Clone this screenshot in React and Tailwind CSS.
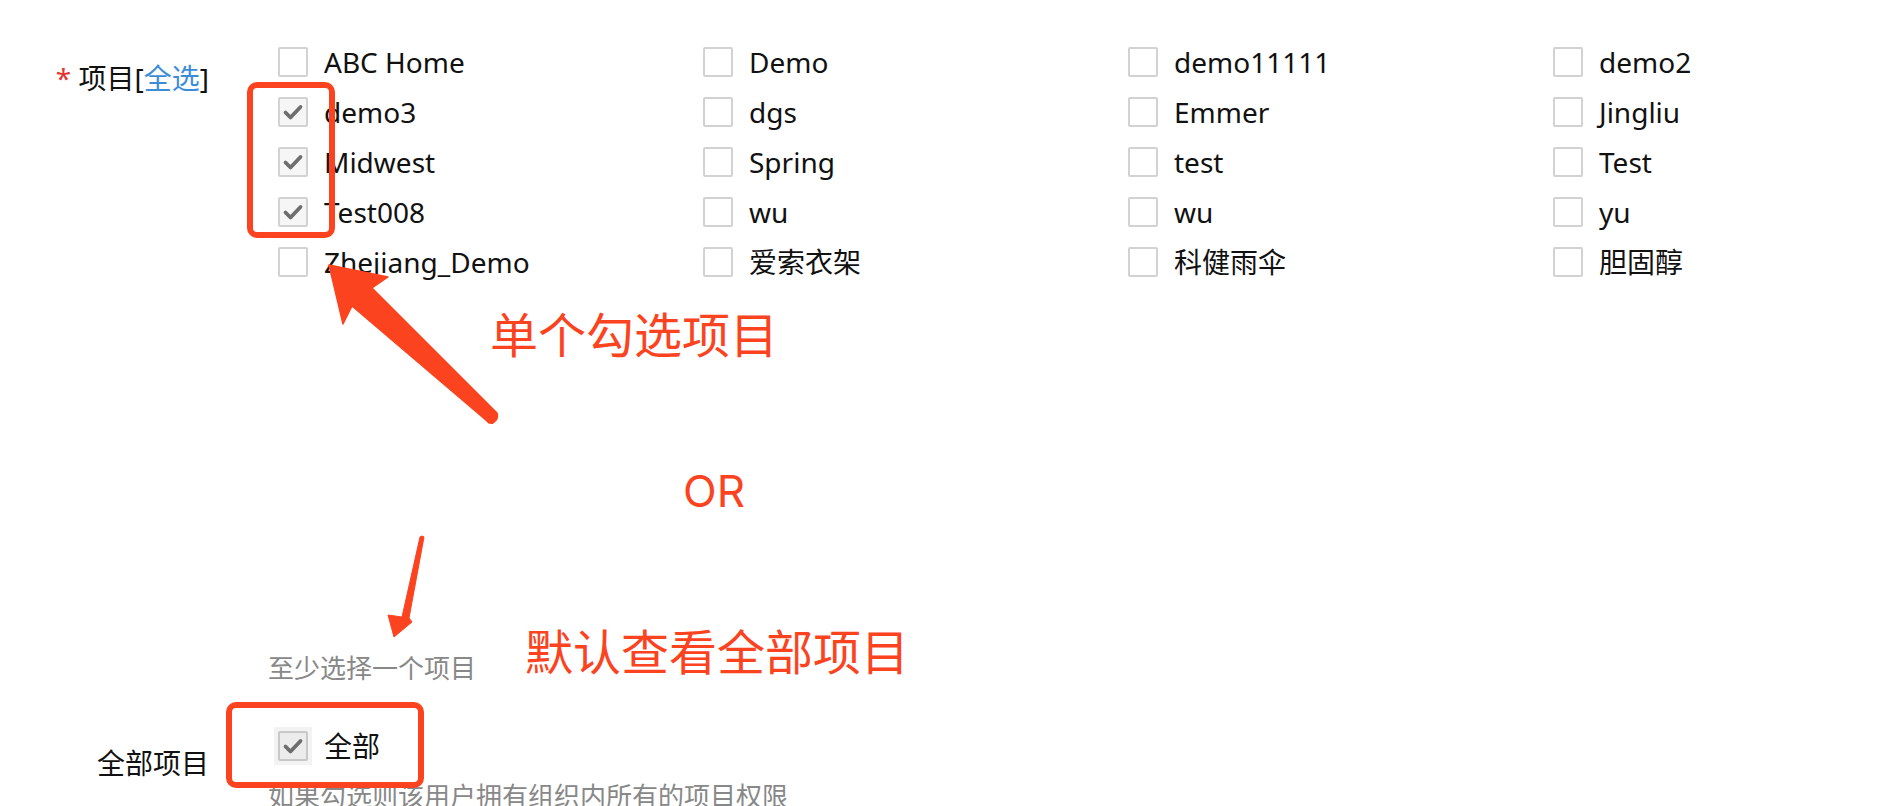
import React from 'react';

const projects = [
  { name: 'ABC Home' }, { name: 'Demo' }, { name: 'demo11111' }, { name: 'demo2' },
  { name: 'demo3', checked: true }, { name: 'dgs' }, { name: 'Emmer' }, { name: 'Jingliu' },
  { name: 'Midwest', checked: true }, { name: 'Spring' }, { name: 'test' }, { name: 'Test' },
  { name: 'Test008', checked: true }, { name: 'wu' }, { name: 'wu' }, { name: 'yu' },
  { name: 'Zhejiang_Demo' }, { name: '爱索衣架' }, { name: '科健雨伞' }, { name: '胆固醇' },
];

function Box({ checked, disabled }) {
  return (
    <span
      className={`w-[30px] h-[30px] shrink-0 box-border border-2 rounded-[2px] flex items-center justify-center ${
        disabled ? 'border-[#c8c8c8] bg-[#ececec]' : checked ? 'border-[#d2d2d2] bg-[#f6f6f6]' : 'border-[#d2d2d2] bg-white'
      }`}
    >
      {checked && (
        <svg width="26" height="26" viewBox="0 0 26 26">
          <path d="M5.5 13.5 L10.5 18.5 L20.5 8" fill="none" stroke="#6e6e6e" strokeWidth="3.8" strokeLinecap="round" strokeLinejoin="round" />
        </svg>
      )}
    </span>
  );
}

export default function App() {
  const red = 'border-[#fb441f]';
  return (
    <div className="relative w-full h-[806px] overflow-hidden bg-white text-[#111] font-['Noto_Sans','Noto_Sans_CJK_SC',sans-serif]">
      <div className="pt-[37px]">
        {/* 项目 */}
        <div className="flex">
          <div className="w-[209px] shrink-0 text-right text-[28px] leading-[40px] pt-[21px] whitespace-nowrap">
            <span className="text-[#e3342f]">*</span> 项目[<span className="text-[#3c8dd8]">全选</span>]
          </div>
          <div className="pl-[59px] flex-1">
            <div className="grid grid-cols-[425px_425px_425px_1fr] pl-[10px]">
              {projects.map((p, i) => (
                <div key={i} className="h-[50px] flex items-center gap-[16px] text-[28px] whitespace-nowrap">
                  <Box checked={p.checked} />
                  <span>{p.name}</span>
                </div>
              ))}
            </div>
            <div className="mt-[363px] text-[26px] leading-[36px] text-[#888]">至少选择一个项目</div>
          </div>
        </div>

        {/* 全部项目 */}
        <div className="flex mt-[39px]">
          <div className="w-[209px] shrink-0 text-right text-[28px] leading-[40px] pt-[18px]">全部项目</div>
          <div className="pl-[59px] flex-1">
            <div className="flex items-center pl-[6px]">
              <span className="p-[4px] bg-[#f3f3f3]">
                <Box checked disabled />
              </span>
              <span className="ml-[12px] text-[28px]">全部</span>
            </div>
            <div className="mt-[11px] text-[26px] leading-[36px] text-[#888] whitespace-nowrap">如果勾选则该用户拥有组织内所有的项目权限</div>
          </div>
        </div>
      </div>

      {/* annotations */}
      <div className={`absolute left-[247px] top-[82px] w-[88px] h-[156px] border-[6px] ${red} rounded-[10px]`} />
      <div className={`absolute left-[226px] top-[702px] w-[198px] h-[86px] border-[6px] ${red} rounded-[10px]`} />
      <div className="absolute left-[490px] top-[308px] text-[48px] leading-[48px] text-[#fb441f] font-['Noto_Sans_CJK_SC',sans-serif] whitespace-nowrap">单个勾选项目</div>
      <div className="absolute left-[683px] top-[469px] text-[44px] leading-[44px] text-[#fb441f] font-['Inter',sans-serif]">OR</div>
      <div className="absolute left-[525px] top-[625px] text-[48px] leading-[48px] text-[#fb441f] font-['Noto_Sans_CJK_SC',sans-serif] whitespace-nowrap">默认查看全部项目</div>
      <svg className="absolute left-0 top-0 pointer-events-none" width="1894" height="806">
        <path
          d="M329 265 L388 277 L372 288 L497 413 Q499 419 493 423 Q489 424 487 421 L352 306 L343 324 Z"
          fill="#fb441f"
          stroke="#fb441f"
          strokeWidth="1.5"
          strokeLinejoin="round"
        />
        <path
          d="M420 537 Q422 535 424 537 L409 618 L412 622 L394 637 L388 615 L402 617 Z"
          fill="#fb441f"
          stroke="#fb441f"
          strokeWidth="1"
          strokeLinejoin="round"
        />
      </svg>
    </div>
  );
}
